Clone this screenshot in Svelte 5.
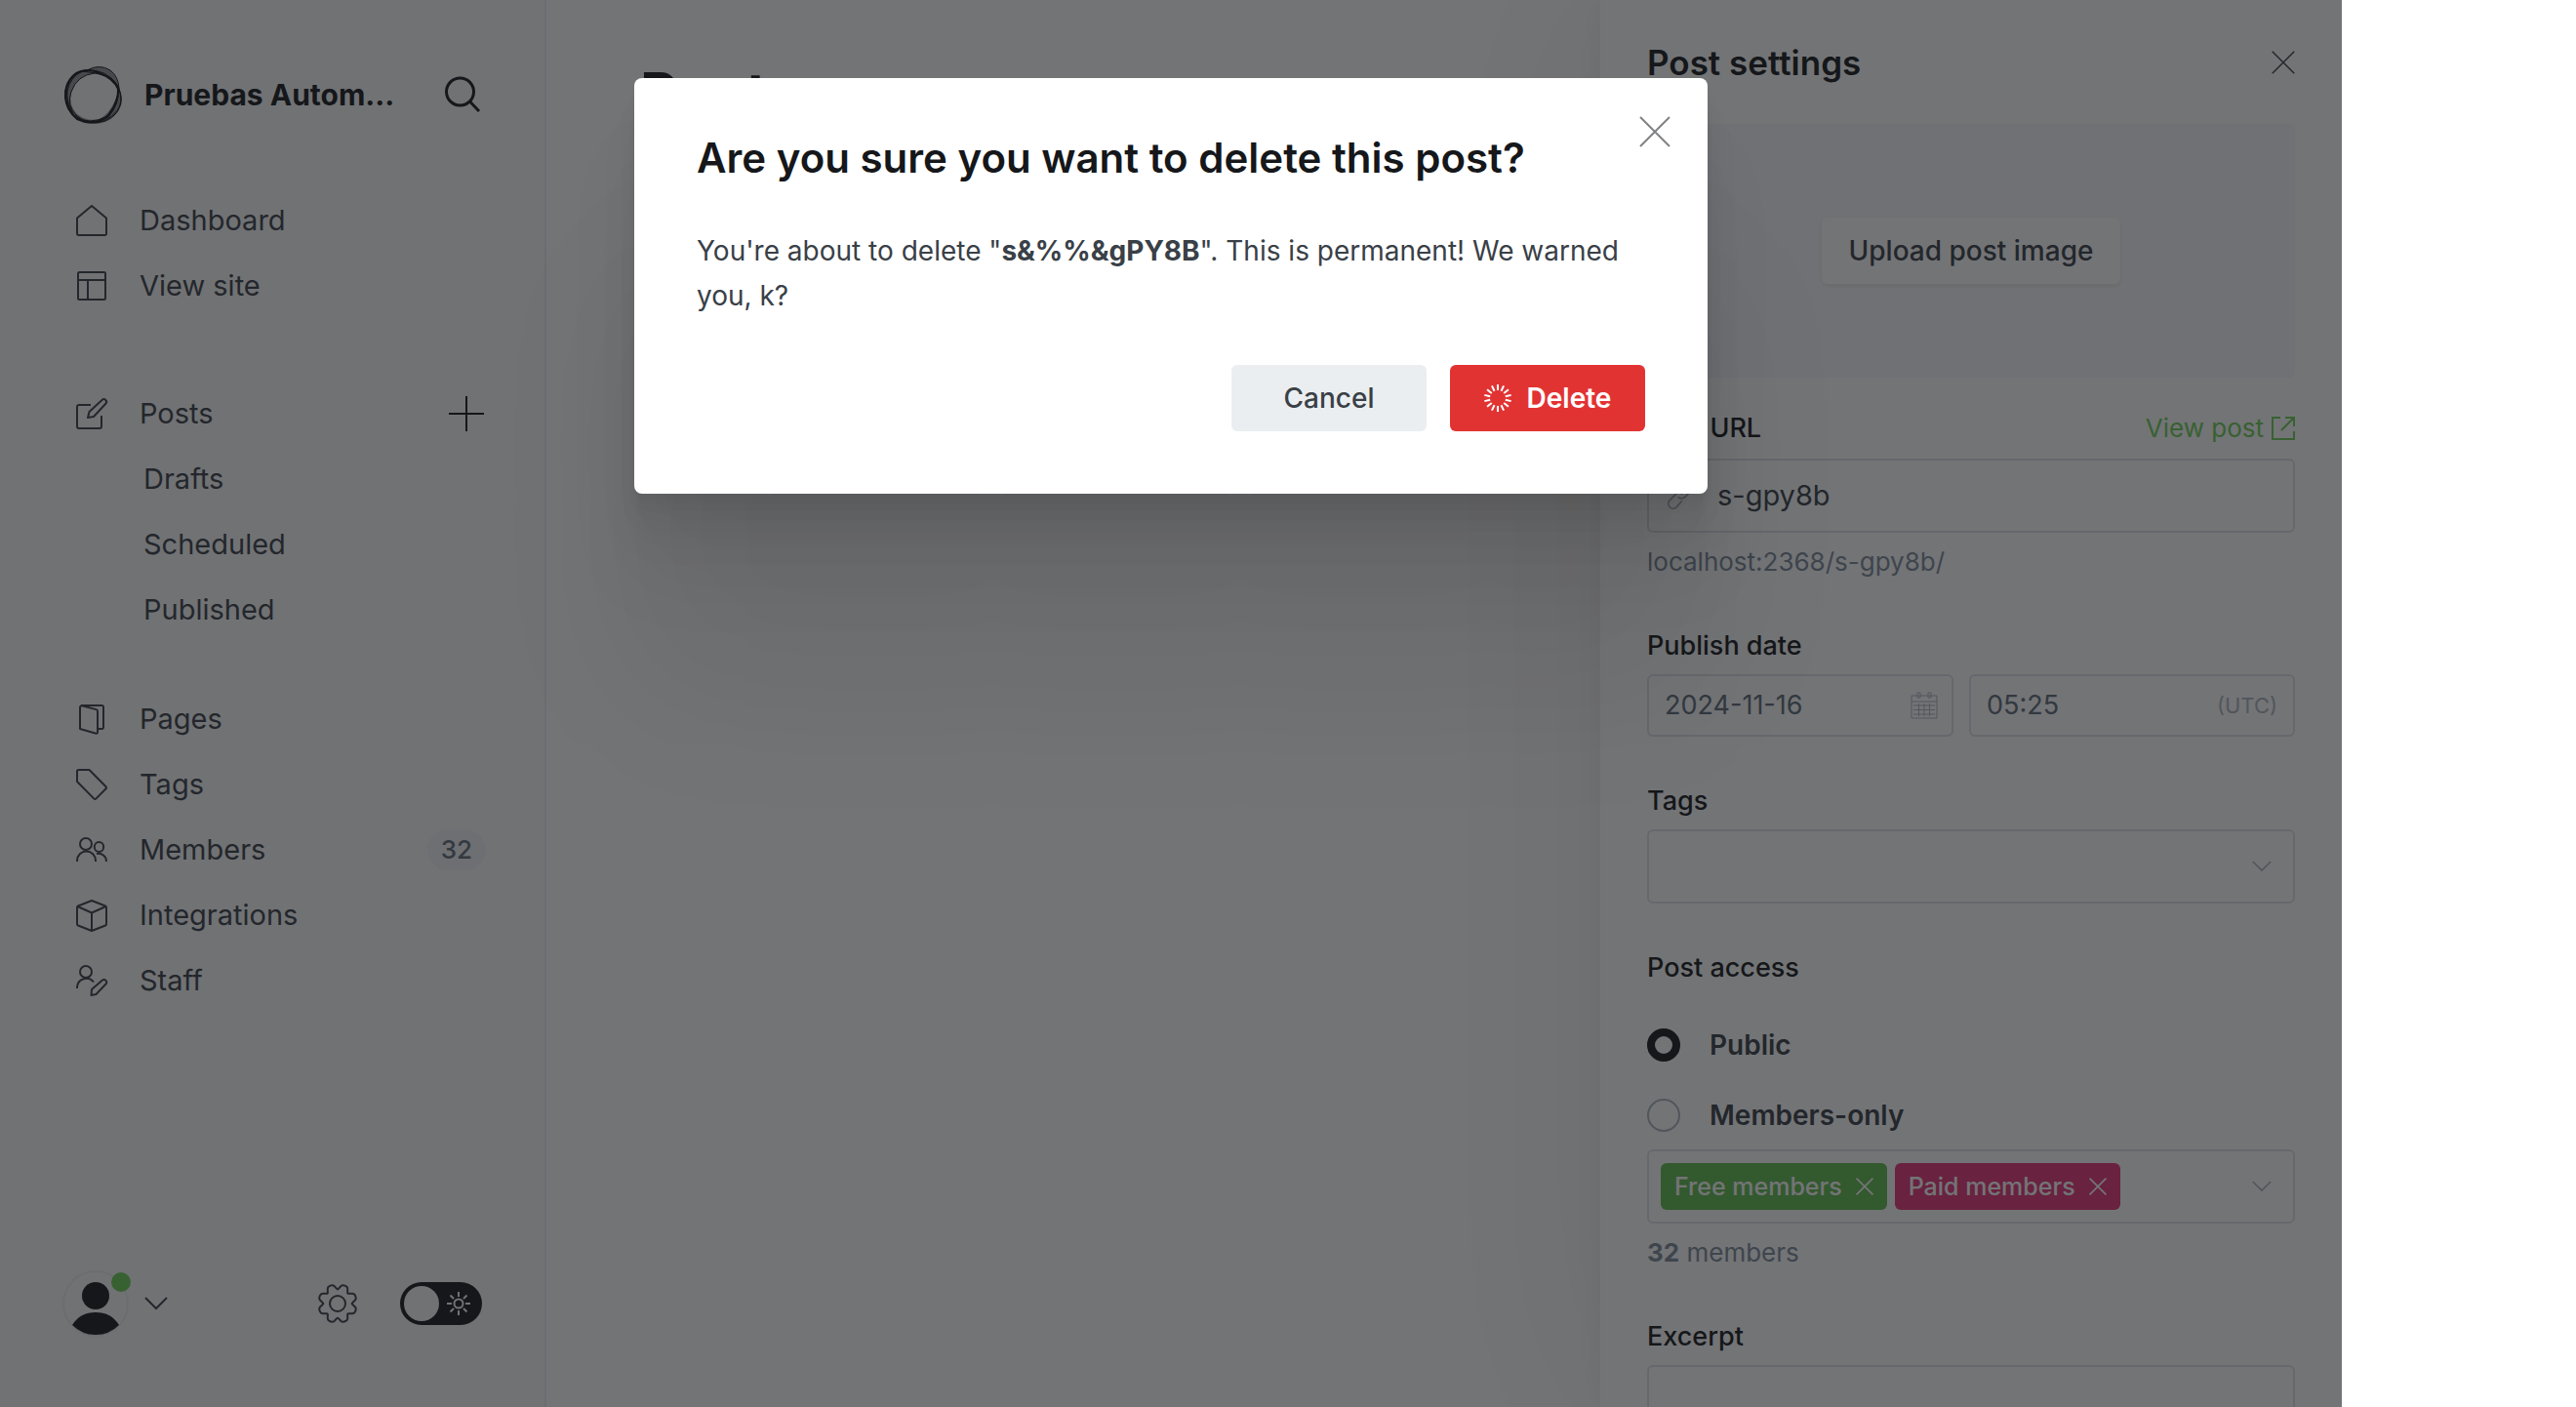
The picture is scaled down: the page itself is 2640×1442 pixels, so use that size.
<script>
  const topLinks = [
    { label: 'Dashboard', icon: 'home' },
    { label: 'View site', icon: 'site' }
  ];
  const postLinks = ['Drafts', 'Scheduled', 'Published'];
  const manageLinks = [
    { label: 'Pages', icon: 'pages' },
    { label: 'Tags', icon: 'tag' },
    { label: 'Members', icon: 'members', count: 32 },
    { label: 'Integrations', icon: 'box' },
    { label: 'Staff', icon: 'staff' }
  ];
  const icons = {
    home: ['M1 13.500 16 1l15 12.500V29.500a1.500 1.500 0 0 1-1.500 1.500h-27A1.500 1.500 0 0 1 1 29.500z'],
    site: ['M3.500 2h25A1.500 1.500 0 0 1 30 3.500v25a1.500 1.500 0 0 1-1.500 1.500h-25A1.500 1.500 0 0 1 2 28.500v-25A1.500 1.500 0 0 1 3.500 2z', 'M2 10h28M12 10v20'],
    edit: ['M15 7H3a2 2 0 0 0-2 2v20a2 2 0 0 0 2 2h21a2 2 0 0 0 2-2V18', 'M12 20l1.500-6L26.500 2a2.600 2.600 0 0 1 3.800 3.800L18 19z'],
    pages: ['M4 3.500v22.500L20.500 30.800a1.200 1.200 0 0 0 1.500-1.200V8a2 2 0 0 0-1.400-1.900L5 2', 'M4 4.500A2.500 2.500 0 0 1 6 2h20.500A1.500 1.500 0 0 1 28 3.500v21a1.500 1.500 0 0 1-1.500 1.500H22'],
    tag: ['M2.500 1H13.500L30.600 18.300a1.300 1.300 0 0 1 0 1.900L20.300 30.600a1.300 1.300 0 0 1-1.900 0L1 13V2.500A1.500 1.500 0 0 1 2.500 1z'],
    members: ['M10 4a6 6 0 1 1 0 12a6 6 0 0 1 0-12z', 'M1 28v-1a9.500 9.500 0 0 1 19 0v1', 'M23.500 8a4.700 5 0 1 1 0 10a4.700 5 0 0 1 0-10z', 'M21 20a8 8 0 0 1 10 8'],
    box: ['M16 1l14 5.500q1 .5 1 1.500v17q0 1-1 1.500L16 32L2 26.500q-1-.5-1-1.500V8q0-1 1-1.500z', 'M1.500 7L16 13.500L30.500 7M16 13.500V32'],
    staff: ['M10 1a6 6 0 1 1 0 12a6 6 0 0 1 0-12z', 'M1 24v-1.500a9.500 9.500 0 0 1 17-5', 'M15.500 31l.5-6L27 15.500a2.700 2.700 0 0 1 3.700 3.800L20.500 30z']
  };
  const gear = Array.from({ length: 8 }, (_, i) => {
    const pt = (r, d) => {
      const a = ((i * 45 + d) * Math.PI) / 180;
      return `${(20 + r * Math.sin(a)).toFixed(2)} ${(20 - r * Math.cos(a)).toFixed(2)}`;
    };
    return `${i ? 'L' : 'M'}${pt(15.2, -3)}Q${pt(14.2, 0)} ${pt(15.2, 3)}L${pt(18.3, 11)}Q${pt(19.6, 14)} ${pt(19.6, 17)}Q${pt(20.2, 22.5)} ${pt(19.6, 28)}Q${pt(19.6, 31)} ${pt(18.3, 34)}`;
  }).join('') + 'Z';
  let access = $state('public');
  let dark = $state(false);
</script>

{#snippet icon(name)}
  <svg class="ico" viewBox="0 0 32 32" aria-hidden="true">
    {#each icons[name] as d}<path {d} />{/each}
  </svg>
{/snippet}

{#snippet cross()}
  <svg viewBox="0 0 32 32" aria-hidden="true"><path d="M1 1l30 30M31 1L1 31" /></svg>
{/snippet}

<div class="app">
  <aside class="sidebar">
    <header class="brand">
      <svg class="logo" viewBox="0 0 62 62" aria-hidden="true">
        <path class="wash" fill-rule="evenodd" d="M25 6Q38 -1 49 6Q56 11 58 24Q64 36 58 47Q49 61 31 61Q14 60 5 45Q-3 24 11 10Q18 5 25 6zM33 9Q15 11 9 29Q6 42 15 51Q25 59 38 56Q53 47 57 26Q50 10 33 9z" />
        <path d="M25 6Q38 -1 49 6Q57 12 58 24Q55 46 41 57Q25 64 11 52Q-1 36 5 19Q12 5 25 6z" />
        <path d="M17 8Q36 2 50 14Q60 22 60 36Q59 52 44 58Q24 64 11 51Q-1 30 8 15Q11 10 17 8z" />
        <path d="M33 9Q15 11 9 28Q4 42 14 52Q26 63 42 58Q62 48 60 34Q57 12 33 9z" />
        <path class="thick" d="M12 11Q25 2 38 9Q52 14 57 25Q58 40 47 53Q32 64 15 56Q4 47 3 34Q2 20 12 11z" />
        <path d="M20 7Q36 8 48 13Q57 20 58 27Q54 46 44 54Q28 62 13 54Q3 43 5 27Q8 13 20 7z" />
      </svg>
      <strong>Pruebas Autom...</strong>
      <button class="search" aria-label="Search">
        <svg viewBox="0 0 36 36"><circle cx="15.500" cy="15" r="14" /><path d="M25.500 25L35 35" /></svg>
      </button>
    </header>

    <nav>
      <ul>
        {#each topLinks as l}
          <li><a href="#{l.icon}">{@render icon(l.icon)}<span>{l.label}</span></a></li>
        {/each}
      </ul>
      <ul class="posts">
        <li class="with-add">
          <a href="#posts">{@render icon('edit')}<span>Posts</span></a>
          <button class="add" aria-label="New post"><svg viewBox="0 0 36 36"><path d="M18 0v36M0 18h36" /></svg></button>
        </li>
        {#each postLinks as l}
          <li><a class="sub" href="#{l.toLowerCase()}">{l}</a></li>
        {/each}
      </ul>
      <ul class="manage">
        {#each manageLinks as l}
          <li>
            <a href="#{l.icon}">{@render icon(l.icon)}<span>{l.label}</span>{#if l.count}<em>{l.count}</em>{/if}</a>
          </li>
        {/each}
      </ul>
    </nav>

    <footer>
      <button class="account" aria-label="Account menu">
        <span class="avatar">
          <svg viewBox="0 0 64 64"><circle cx="32" cy="24" r="14" /><path d="M8 54Q16 41 32 41T56 54Q46 64 32 64T8 54z" /></svg>
          <i></i>
        </span>
        <svg class="chev" viewBox="0 0 24 14"><path d="M1 1l11 11L23 1" /></svg>
      </button>
      <a class="gear" href="#settings" aria-label="Settings">
        <svg viewBox="0 0 40 40"><path d={gear} /><circle cx="20" cy="20" r="8" /></svg>
      </a>
      <label class="toggle">
        <input type="checkbox" bind:checked={dark} aria-label="Night shift" />
        <b></b>
        <svg viewBox="0 0 24 24">
          <circle cx="12" cy="12" r="4.500" />
          <path d="M12 0v5M12 19v5M0 12h5M19 12h5M3.500 3.500L7 7M17 17l3.500 3.500M20.500 3.500L17 7M7 17l-3.500 3.500" />
        </svg>
      </label>
    </footer>
  </aside>

  <main><h1>Posts</h1></main>

  <section class="panel" aria-label="Post settings">
    <div class="panel-head">
      <h2>Post settings</h2>
      <button class="close" aria-label="Close settings">{@render cross()}</button>
    </div>

    <div class="upload"><button>Upload post image</button></div>

    <div class="field url">
      <div class="label-row">
        <label for="url">Post URL</label>
        <a href="#view">View post
          <svg viewBox="0 0 24 24"><path d="M9 1H1v22h22v-8M14 1h9v9M23 1L10 14" /></svg>
        </a>
      </div>
      <div class="control tall">
        <svg class="link" viewBox="0 0 32 32"><path d="M14 10l6-7a5.500 5.500 0 0 1 8.500 7.500l-7 7a5.500 5.500 0 0 1-8 0" /><path d="M18 22l-6 7a5.500 5.500 0 0 1-8.500-7.500l7-7a5.500 5.500 0 0 1 8 0" /></svg>
        <input id="url" value="s-gpy8b" />
      </div>
      <p class="hint">localhost:2368/s-gpy8b/</p>
    </div>

    <div class="field date">
      <label for="date">Publish date</label>
      <div class="pair">
        <div class="control">
          <input id="date" value="2024-11-16" />
          <svg class="cal" viewBox="0 0 28 28"><path d="M1 4h26v23H1zM1 10h26M7 1h3v5H7zM18 1h3v5h-3zM3 14h22M3 18.500h22M3 23h22M8.500 12v13M14 12v13M19.500 12v13" /></svg>
        </div>
        <div class="control">
          <input value="05:25" aria-label="Publish time" />
          <small>(UTC)</small>
        </div>
      </div>
    </div>

    <div class="field tags">
      <label for="tags">Tags</label>
      <div class="control tall">
        <select id="tags"><option></option></select>
        <svg class="drop" viewBox="0 0 24 14"><path d="M1 1l11 11L23 1" /></svg>
      </div>
    </div>

    <fieldset>
      <legend>Post access</legend>
      <label><input type="radio" name="access" value="public" bind:group={access} />Public</label>
      <label><input type="radio" name="access" value="members" bind:group={access} />Members-only</label>
      <div class="control tall chips">
        <button class="free">Free members {@render cross()}</button>
        <button class="paid">Paid members {@render cross()}</button>
        <svg class="drop" viewBox="0 0 24 14"><path d="M1 1l11 11L23 1" /></svg>
      </div>
      <p class="hint"><b>32</b> members</p>
    </fieldset>

    <div class="field excerpt">
      <label for="excerpt">Excerpt</label>
      <textarea id="excerpt"></textarea>
    </div>
  </section>

  <div class="overlay">
    <div class="modal" role="dialog" aria-modal="true" aria-labelledby="modal-title">
      <button class="close" aria-label="Close">{@render cross()}</button>
      <h2 id="modal-title">Are you sure you want to delete this post?</h2>
      <p>You're about to delete "<strong>s&amp;%%&amp;gPY8B</strong>". This is permanent! We warned you, k?</p>
      <div class="actions">
        <button class="cancel">Cancel</button>
        <button class="delete">
          <svg viewBox="0 0 28 28" aria-hidden="true">
            {#each Array(14) as _, i}
              <path d="M14 0v6" transform="rotate({(i * 360) / 14} 14 14)" />
            {/each}
          </svg>
          Delete
        </button>
      </div>
    </div>
  </div>
</div>

<style>
  :global(body) { background: #fff; overflow: hidden; }
  .app, .app * { box-sizing: border-box; }
  .app {
    position: relative;
    display: grid;
    grid-template-columns: 560px minmax(0, 1fr) 760px;
    height: 100vh;
    margin-right: 240px;
    overflow: hidden;
    font-family: Inter, "Liberation Sans", sans-serif;
    font-size: 28px;
    line-height: 36px;
    color: #394047;
  }
  h1, h2, p, ul { margin: 0; padding: 0; }
  ul { list-style: none; }
  a { color: inherit; text-decoration: none; }
  button, input, select, textarea { font: inherit; color: inherit; margin: 0; padding: 0; border: 0; background: none; }
  svg { display: block; flex: none; fill: none; stroke: currentColor; stroke-width: 2; overflow: visible; }

  .sidebar { display: flex; flex-direction: column; background: #fafafb; border-right: 2px solid #ebeef0; }
  .brand { display: flex; align-items: center; height: 64px; margin: 65px 66px 0 64px; color: #15171a; }
  .logo { width: 62px; height: 62px; stroke-width: 1; }
  .logo .wash { fill: #15171a; fill-opacity: 0.45; stroke: none; }
  .logo .thick { stroke-width: 2; }
  .brand strong { flex: 1; margin-left: 22px; font-size: 30px; font-weight: 700; white-space: nowrap; }
  .search svg { width: 36px; height: 36px; stroke-width: 3; }
  nav { flex: 1; padding-top: 63px; font-size: 29px; }
  nav li { display: flex; }
  nav a { flex: 1; display: flex; align-items: center; height: 67px; padding: 0 60px 0 78px; }
  nav a span { margin-left: 33px; flex: 1; }
  nav .sub { padding-left: 147px; }
  .ico { width: 32px; height: 32px; stroke-linejoin: round; }
  .posts { margin-top: 64px; }
  .manage { margin-top: 45px; }
  .with-add { align-items: center; padding-right: 62px; }
  .add { color: #15171a; }
  .add svg { width: 36px; height: 36px; }
  em { padding: 3px 14px; border-radius: 21px; background: #f1f3f4; color: #626d79; font-size: 26px; font-style: normal; font-weight: 500; }
  footer { display: flex; align-items: center; margin: 0 64px 72px; color: #15171a; }
  .account { display: flex; align-items: center; margin-right: auto; }
  .avatar { position: relative; width: 68px; height: 68px; border: 2px solid #ebeef0; border-radius: 50%; }
  .avatar svg { width: 64px; height: 64px; fill: #15171a; stroke: none; }
  .avatar i { position: absolute; top: 0; right: -4px; width: 20px; height: 20px; border-radius: 50%; background: #6bcf55; }
  .chev { width: 24px; height: 14px; margin-left: 16px; color: #394047; }
  .gear { margin-right: 44px; color: #394047; }
  .gear svg { width: 40px; height: 40px; }
  .toggle { display: flex; align-items: center; justify-content: space-between; width: 84px; height: 44px; padding: 0 12px 0 4px; border-radius: 22px; background: #15171a; color: #fafafb; }
  .toggle input { position: absolute; opacity: 0; }
  .toggle b { width: 36px; height: 36px; border-radius: 50%; background: #fafafb; }
  .toggle svg { width: 24px; height: 24px; }

  main { padding: 64px 96px; }
  h1 { font-size: 60px; line-height: 64px; font-weight: 700; color: #15171a; }

  .panel { padding: 0 48px; background: #fff; box-shadow: 0 0 200px rgba(0, 0, 0, 0.08), 0 0 28px rgba(0, 0, 0, 0.05); overflow: hidden; }
  .panel-head { display: flex; align-items: center; justify-content: space-between; height: 127px; }
  .panel-head h2 { font-size: 35px; line-height: 44px; font-weight: 600; color: #15171a; }
  .panel-head .close svg { width: 24px; height: 24px; }
  .upload { display: flex; align-items: center; justify-content: center; height: 260px; border-radius: 6px; background: #f7f8f9; }
  .upload button { height: 68px; padding: 0 28px; border-radius: 6px; background: #fff; font-weight: 500; box-shadow: 0 2px 4px rgba(0, 0, 0, 0.08); }
  .field, fieldset { font-size: 26px; }
  .field label, legend { display: block; font-size: 27px; font-weight: 500; color: #15171a; }
  .url { margin-top: 34px; }
  .label-row { display: flex; justify-content: space-between; margin-bottom: 13px; }
  .label-row a { display: flex; align-items: center; gap: 8px; color: #6bcf55; }
  .label-row svg { width: 24px; height: 24px; }
  .control { display: flex; align-items: center; min-width: 0; height: 64px; padding: 0 18px; border: 2px solid #dde1e5; border-radius: 6px; }
  .control.tall { height: 76px; }
  .control input, .control select { flex: 1; min-width: 0; outline: 0; appearance: none; }
  .url input { font-size: 29px; margin-left: 24px; }
  .link { width: 28px; height: 28px; color: #abb4be; }
  .hint { margin-top: 12px; color: #7c8b9a; font-size: 26px; }
  .date { margin-top: 50px; }
  .pair { display: grid; grid-template-columns: minmax(0, 314fr) minmax(0, 334fr); gap: 16px; margin-top: 11px; }
  .pair .control { color: #5d6b79; font-size: 27px; padding: 0 16px; }
  .cal { width: 28px; height: 28px; margin-right: -2px; color: #abb4be; stroke-width: 1; }
  small { font-size: 22px; color: #abb4be; }
  .tags { margin-top: 48px; }
  .tags .control { margin-top: 11px; }
  .drop { width: 20px; height: 12px; margin: 0 4px 0 auto; color: #abb4be; }
  fieldset { margin: 48px 0 0; padding: 0; border: 0; min-width: 0; }
  legend { padding: 0; margin-bottom: 24px; }
  fieldset label { display: flex; align-items: center; gap: 30px; height: 70px; font-size: 28px; font-weight: 600; }
  fieldset label:nth-of-type(1) { height: 74px; }
  input[type='radio'] { appearance: none; width: 34px; height: 34px; border: 2px solid #abb4be; border-radius: 50%; }
  input[type='radio']:checked { border: 8px solid #15171a; }
  .chips { gap: 8px; padding: 0 12px; }
  .chips button { display: flex; align-items: center; gap: 14px; height: 48px; padding: 0 14px; border-radius: 6px; color: #fff; font-size: 25px; font-weight: 500; }
  .chips button svg { width: 18px; height: 18px; stroke-width: 3; }
  .chips .drop { margin-right: 10px; }
  .free { background: #60bc4e; }
  .paid { background: #e73278; }
  .excerpt { margin-top: 50px; }
  textarea { display: block; width: 100%; height: 200px; margin-top: 11px; border: 2px solid #dde1e5; border-radius: 6px; resize: none; }

  .overlay { position: absolute; inset: 0; display: flex; justify-content: center; align-items: flex-start; padding-top: 80px; background: rgba(21, 23, 26, 0.6); }
  .modal {
    position: relative;
    width: 1100px;
    padding: 56px 64px 64px;
    border-radius: 8px;
    background: #fff;
    box-shadow: 0 6px 5px rgba(0, 0, 0, 0.02), 0 13px 13px rgba(0, 0, 0, 0.02), 0 25px 25px rgba(0, 0, 0, 0.03),
      0 45px 45px rgba(0, 0, 0, 0.04), 0 84px 84px rgba(0, 0, 0, 0.05), 0 200px 160px rgba(0, 0, 0, 0.07);
  }
  .modal .close { position: absolute; top: 39px; right: 38px; color: #808284; }
  .modal .close svg { width: 32px; height: 32px; }
  .modal h2 { font-size: 42px; line-height: 52px; font-weight: 600; color: #15171a; }
  .modal p { margin-top: 46px; line-height: 46px; }
  .actions { display: flex; justify-content: flex-end; gap: 24px; margin-top: 48px; }
  .actions button { display: flex; align-items: center; justify-content: center; gap: 16px; width: 200px; height: 68px; border-radius: 6px; font-weight: 600; }
  .actions .cancel { background: #ebeef0; font-weight: 500; }
  .delete { background: #e23333; color: #fff; }
  .delete svg { width: 28px; height: 28px; }
</style>
